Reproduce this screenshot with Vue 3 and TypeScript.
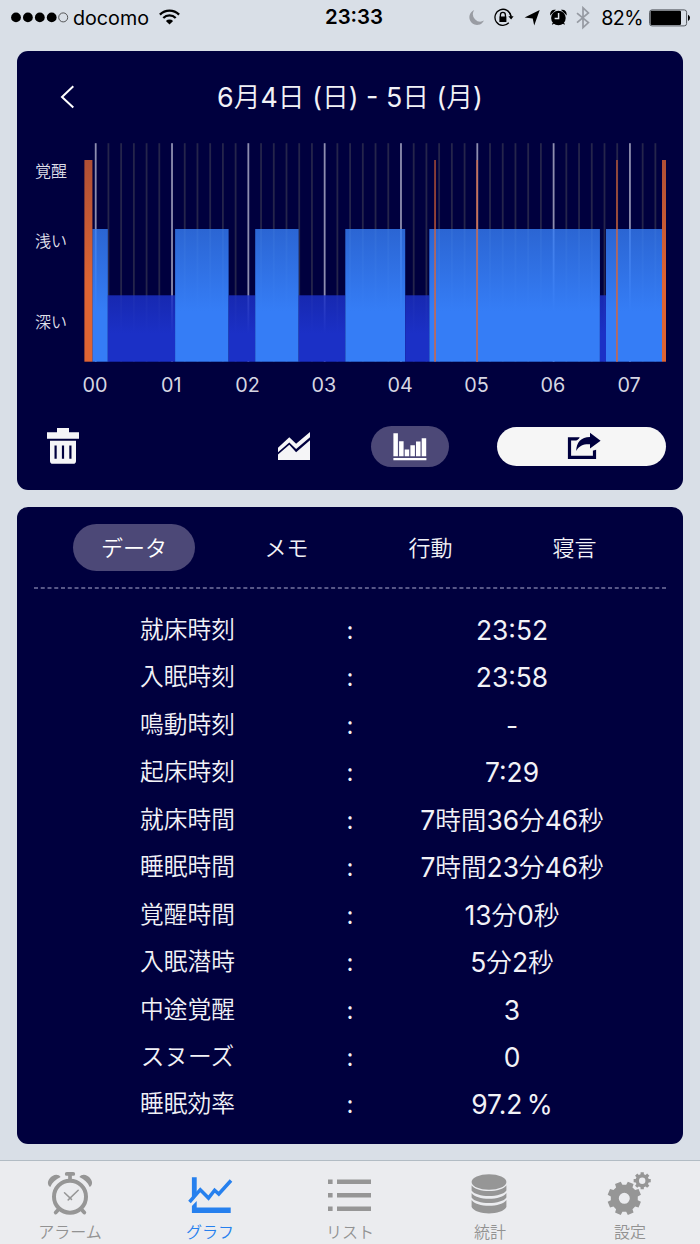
<script setup lang="ts">
interface Band { x: number; w: number; kind: 'light' | 'deep' | 'awake' | 'blip' }

const tops = { light: 229, deep: 295.3, awake: 160, blip: 160 }
const baseY = 361.7

const bands: Band[] = [
  { x: 92.3, w: 15.5, kind: 'light' },
  { x: 107.8, w: 67.3, kind: 'deep' },
  { x: 175.1, w: 53.5, kind: 'light' },
  { x: 228.6, w: 26.6, kind: 'deep' },
  { x: 255.2, w: 43.4, kind: 'light' },
  { x: 298.6, w: 46.7, kind: 'deep' },
  { x: 345.3, w: 59.9, kind: 'light' },
  { x: 405.2, w: 24.1, kind: 'deep' },
  { x: 429.3, w: 170.6, kind: 'light' },
  { x: 599.9, w: 6.1, kind: 'deep' },
  { x: 606, w: 56.2, kind: 'light' },
  { x: 84.4, w: 8, kind: 'awake' },
  { x: 662, w: 4, kind: 'awake' },
  { x: 434.1, w: 1.9, kind: 'blip' },
  { x: 476.1, w: 1.9, kind: 'blip' },
  { x: 616, w: 1.9, kind: 'blip' },
]

const gridLines = Array.from({ length: 45 }, (_, i) => ({ x: 95.7 + i * 12.72, hour: i % 6 === 0 }))
const hours = ['00', '01', '02', '03', '04', '05', '06', '07']

const tabs = ['データ', 'メモ', '行動', '寝言']

const rows: [string, string][] = [
  ['就床時刻', '23:52'],
  ['入眠時刻', '23:58'],
  ['鳴動時刻', '-'],
  ['起床時刻', '7:29'],
  ['就床時間', '7時間36分46秒'],
  ['睡眠時間', '7時間23分46秒'],
  ['覚醒時間', '13分0秒'],
  ['入眠潜時', '5分2秒'],
  ['中途覚醒', '3'],
  ['スヌーズ', '0'],
  ['睡眠効率', '97.2 %'],
]

// Splits a string into latin and kanji runs so each can carry its own weight.
function runs(text: string) {
  return (text.match(/[\x20-\x7e]+|[^\x20-\x7e]+/g) ?? []).map(t => ({ t, latin: t.charCodeAt(0) < 128 }))
}

function gear(cx: number, cy: number, outer: number, root: number, hole: number, start: number): string {
  const pts: string[] = []
  for (let i = 0; i < 8; i++) {
    const mid = start + i * 45
    const corners: [number, number][] = [[-14.5, root], [-10.5, outer], [10.5, outer], [14.5, root]]
    for (const [da, r] of corners) {
      const a = ((mid + da) * Math.PI) / 180
      pts.push(`${(cx + r * Math.cos(a)).toFixed(2)} ${(cy + r * Math.sin(a)).toFixed(2)}`)
    }
  }
  return `M${pts.join('L')}ZM${cx - hole} ${cy}a${hole} ${hole} 0 1 0 ${hole * 2} 0a${hole} ${hole} 0 1 0 ${-hole * 2} 0Z`
}
const gears = gear(24.3, 29.3, 17, 13.6, 5.5, 22.5) + gear(42.2, 11.7, 8.7, 6.7, 3.2, 0)
</script>

<template>
  <div class="screen">
    <header class="status">
      <div class="status-left">
        <svg class="dots" width="58" height="12" viewBox="0 0 58 12">
          <circle v-for="i in 4" :key="i" :cx="5 + (i - 1) * 11.9" cy="5.4" r="4.9" />
          <circle cx="52.2" cy="5.4" r="4.5" fill="none" stroke="#333" stroke-width=".8" />
        </svg>
        <span class="carrier">docomo</span>
        <svg class="wifi" width="21" height="16" viewBox="0 0 21 16">
          <g fill="none" stroke="#000" stroke-width="2.3">
            <path d="M.9 5.6a13.6 13.6 0 0 1 19.2 0" />
            <path d="M4.3 9a8.8 8.8 0 0 1 12.4 0" />
          </g>
          <path d="M10.5 15.6 6.9 12a5.1 5.1 0 0 1 7.2 0Z" />
        </svg>
      </div>
      <div class="clock">23:33</div>
      <div class="status-right">
        <svg width="128" height="24" viewBox="0 0 128 24">
          <path fill="#999ca3" d="M6.2 4.1A7.7 7.7 0 1 0 16 14.6 7.4 7.4 0 0 1 6.2 4.1Z" />
          <g fill="none" stroke="#000" stroke-width="1.3">
            <path d="M42.9 10.2A8 8 0 1 0 40.8 16.8" />
            <path d="M32.4 11V8.9a2.5 2.5 0 0 1 5 0V11" />
            <path d="M40.8 5.9a8 8 0 0 1 2.3 5" />
          </g>
          <path d="M31.4 10.4h7v5.6h-7zM40.4 10.2h5.2l-2.5 3.3z" />
          <path d="M71.7 4 66.2 19.4 64.7 12.5 56.6 11.5Z" />
          <circle cx="90.4" cy="12" r="7.3" />
          <path d="M82.7 8a4 4 0 0 1 3.8-3.7zM98.1 8a4 4 0 0 0-3.8-3.7zM84.2 18.4l2-2M96.6 18.4l-2-2" stroke="#000" stroke-width="1.1" />
          <path d="M90.6 7v5.6h-4" fill="none" stroke="#e4e8ee" stroke-width="1.5" />
          <path d="M109 7.2 120.4 16.6 115 21.6V1.8L120.4 6.9 109 16.6" fill="none" stroke="#969aa2" stroke-width="1.7" />
        </svg>
        <span class="percent">82%</span>
        <svg class="battery" width="42" height="18" viewBox="0 0 42 18">
          <rect x=".6" y=".9" width="37" height="16" rx="2.4" fill="none" stroke="#555a60" stroke-width="1" />
          <rect x="1.5" y="1.8" width="30.5" height="14.2" rx="1.2" />
          <path d="M39 5.7a3.4 3.4 0 0 1 0 6.2Z" />
        </svg>
      </div>
    </header>

    <section class="card graph">
      <div class="title">
        <svg class="back" width="15" height="24" viewBox="0 0 15 24">
          <path d="M13.3 1.3 2 12 13.3 22.6" fill="none" stroke="#fff" stroke-width="2" />
        </svg>
        <h1><span v-for="(s, i) in runs('6月4日 (日) - 5日 (月)')" :key="i" :class="{ latin: s.latin }">{{ s.t }}</span></h1>
      </div>

      <svg class="chart" width="666" height="262" viewBox="17 140 666 262">
        <defs>
          <linearGradient id="light" x2="0" y2="1">
            <stop offset="0" stop-color="#357df6" stop-opacity=".81" />
            <stop offset=".62" stop-color="#357df6" />
          </linearGradient>
          <linearGradient id="deep" x2="0" y2="1">
            <stop offset="0" stop-color="#1b30c6" stop-opacity=".84" />
            <stop offset=".58" stop-color="#1b30c6" />
          </linearGradient>
          <linearGradient id="awake" x2="0" y2="1">
            <stop offset="0" stop-color="#de6433" stop-opacity=".79" />
            <stop offset=".62" stop-color="#de6433" />
          </linearGradient>
        </defs>
        <rect
          v-for="(g, i) in gridLines" :key="'g' + i" :x="g.x - 0.9" y="143.2" width="1.8" :height="baseY - 143.2"
          :class="g.hour ? 'line-hour' : 'line-minor'"
        />
        <rect
          v-for="(b, i) in bands" :key="'b' + i" :x="b.x" :width="b.w" :y="tops[b.kind]" :height="baseY - tops[b.kind]"
          :class="b.kind"
        />
        <g class="levels">
          <text x="35" y="176.7">覚醒</text>
          <text x="35" y="246.7">浅い</text>
          <text x="35" y="327.5">深い</text>
        </g>
        <g class="hours">
          <text v-for="(h, i) in hours" :key="h" :x="95 + i * 76.3" y="391.7">{{ h }}</text>
        </g>
      </svg>

      <div class="tools">
        <svg class="trash" width="32" height="36" viewBox="0 0 32 36" fill="#f5f5f7">
          <path d="M0 4.3h10V0h12v4.3h10v6.4H0Z" />
          <path fill-rule="evenodd" d="M3 12.7h26v20.2a2.8 2.8 0 0 1-2.8 2.8H5.8A2.8 2.8 0 0 1 3 32.9ZM7.5 17.6v13.2h2.2V17.6ZM14.9 17.6v13.2h2.2V17.6ZM22.3 17.6v13.2h2.2V17.6Z" />
        </svg>
        <svg class="area" width="32" height="28" viewBox="0 0 32 28" fill="#f5f5f7">
          <path d="M0 15.8 11.3 5.2 18.1 11.8 32 0V5.2L18.1 17.1 11.3 10.4 0 20.3Z" />
          <path d="M0 22.6 11.3 12.7 18.1 20.2 32 8.2V28H0Z" />
        </svg>
        <div class="bars-pill">
          <svg width="34" height="28" viewBox="0 0 34 28" fill="#fff">
            <path d="M.4.3h4.5v23H.4zM6.1 8.2h4.5v15.1H6.1zM11.7 16.6h4.5v6.7h-4.5zM17.4 12.3h4.5v11h-4.5zM23 8.6h4.5v14.7H23zM28.7 5.3h4.5v18h-4.5zM.4 25h33v2.3H.4z" />
          </svg>
        </div>
        <div class="share">
          <svg width="34" height="28" viewBox="0 0 34 28">
            <path d="M12.5 6.8H2.5v18.6h25V17" fill="none" stroke="#00003e" stroke-width="3.2" />
            <path fill="#f6f6f6" d="M8 19V10l7-6h8v12l-6 1-5 5z" />
            <path fill="#00003e" d="M23 .7 33.6 8.7 23 16.4V12.2C16.5 11.9 12.3 13.3 9.2 19 9.4 10.2 14 5.2 23 4.9Z" />
            <path fill="#f6f6f6" d="M24.5 17.5 30 14v3.5l-4.5 1.3z" />
          </svg>
        </div>
      </div>
    </section>

    <section class="card details">
      <nav class="tabs">
        <span v-for="(t, i) in tabs" :key="t" :class="['tab', { active: i === 0 }]">{{ t }}</span>
      </nav>
      <svg class="rule" width="632" height="2" viewBox="0 0 632 2">
        <path d="M0 1H632" stroke="#7474a0" stroke-width="1.3" stroke-dasharray="4 2.753" />
      </svg>
      <dl>
        <div v-for="r in rows" :key="r[0]" class="row">
          <dt>{{ r[0] }}</dt>
          <span class="colon">:</span>
          <dd><span v-for="(s, i) in runs(r[1])" :key="i" :class="{ latin: s.latin }">{{ s.t }}</span></dd>
        </div>
      </dl>
    </section>

    <footer class="tabbar">
      <div class="item">
        <svg width="60" height="48" viewBox="0 0 60 48" fill="none" stroke="#969696">
          <circle cx="30" cy="27.7" r="16" stroke-width="4" />
          <path d="M30 10V5M26.7 4.9h6.6" stroke-width="3.7" stroke-linecap="round" />
          <path d="M18 41l-2.3 2.5M42 41l2.3 2.5" stroke-width="3.8" stroke-linecap="round" />
          <path d="M24.5 23.8l7 6.6M38.2 21.3 28.2 30.9" stroke-width="1.5" stroke-linecap="round" />
          <path d="M10.3 18C6 15.5 8 9.5 12.5 7 15.5 5 18.8 5.4 20.6 8 15.5 10.3 12.3 13.5 10.3 18ZM49.7 18C54 15.5 52 9.5 47.5 7 44.5 5 41.2 5.4 39.4 8 44.5 10.3 47.7 13.5 49.7 18Z" fill="#969696" stroke="none" />
        </svg>
        <span>アラーム</span>
      </div>
      <div class="item on">
        <svg width="60" height="48" viewBox="1 0 60 48">
          <path fill="#2680ee" d="M12.9 8.2h4.8V24l-4.8 5.2zM17.7 32v6.4h34V44H12.9v-7z" />
          <path d="M10.5 33 21.3 20.7 29.5 29 35.6 21.2 39.8 25 52 11.5" fill="none" stroke="#2680ee" stroke-width="3.5" />
        </svg>
        <span>グラフ</span>
      </div>
      <div class="item">
        <svg width="60" height="48" viewBox="0 0 60 48" fill="#969696">
          <path d="M8 10.4h4.6V15H8zM17 10.4h34V15H17zM8 24h4.6v4.5H8zM17 24h34v4.5H17zM8 37.6h4.6V42H8zM17 37.6h34V42H17z" />
        </svg>
        <span>リスト</span>
      </div>
      <div class="item">
        <svg width="60" height="48" viewBox="0 0 60 48" fill="#969696">
          <ellipse cx="29" cy="13" rx="17.4" ry="7.8" />
          <path d="M11.6 16.3C16 24 42 24 46.4 16.3v5.2C42 28.8 16 28.8 11.6 21.5ZM11.6 24C16 31.7 42 31.7 46.4 24v4.5C42 35.8 16 35.8 11.6 28.5ZM11.6 31C16 38.7 42 38.7 46.4 31v7C42 46.6 16 46.6 11.6 38Z" />
        </svg>
        <span>統計</span>
      </div>
      <div class="item">
        <svg width="60" height="48" viewBox="0 0 60 48">
          <path :d="gears" fill="#969696" fill-rule="evenodd" />
        </svg>
        <span>設定</span>
      </div>
    </footer>
  </div>
</template>

<style>
body { margin: 0; background: #d9dfe7; }
</style>

<style scoped>
.screen {
  width: 700px;
  height: 1244px;
  display: flex;
  flex-direction: column;
  background: #d9dfe7;
  color: #f2f2f7;
  font-family: Inter, "Noto Sans CJK JP", sans-serif;
  font-weight: 350;
  overflow: hidden;
}
svg { display: block; flex: none; }
.latin { font-weight: 400; white-space: pre; }
.status {
  height: 36px;
  margin-bottom: 15px;
  padding: 0 9px 0 11px;
  display: grid;
  grid-template-columns: 1fr auto 1fr;
  align-items: center;
  color: #000;
  font-size: 19.7px;
  font-weight: 400;
}
.status-left, .status-right { display: flex; align-items: center; }
.status-right { justify-content: flex-end; }
.carrier { margin-left: 4px; }
.wifi { margin: 0 0 3px 10px; }
.clock { font-weight: 600; font-size: 20.4px; line-height: 24px; margin: 0 0 2px 6px; }
.percent { margin: 0 6px 0 5px; letter-spacing: -.6px; }
.card {
  box-sizing: border-box;
  width: 666px;
  margin: 0 auto;
  border-radius: 11px;
  background: #00003e;
  flex: none;
}
.graph { height: 439px; margin-bottom: 17px; }
.title { height: 89px; display: flex; align-items: center; }
.back { margin: 3px 0 0 43px; }
h1 {
  margin: 3px 58px 0 0;
  flex: 1;
  text-align: center;
  font-size: 26.8px;
  line-height: 36px;
  font-weight: 350;
}
.line-hour { fill: #8e8eaf; }
.line-minor { fill: #25254b; }
.light { fill: url(#light); }
.deep { fill: url(#deep); }
.awake { fill: url(#awake); }
.blip { fill: url(#awake); opacity: .75; }
.levels { fill: #dedee8; font-size: 16px; }
.hours { fill: #d6d6e2; font-size: 19.8px; font-weight: 400; text-anchor: middle; }
.tools { height: 88px; display: flex; align-items: center; padding: 0 17px 0 30px; }
.area { margin: -1px 0 0 199px; }
.bars-pill {
  width: 78px;
  height: 41px;
  margin-left: 61px;
  border-radius: 21px;
  background: #4c4877;
  display: grid;
  place-items: center;
}
.bars-pill svg { margin-top: 2px; }
.share {
  width: 169px;
  height: 39px;
  margin-left: 48px;
  border-radius: 20px;
  background: #f6f6f6;
  display: grid;
  place-items: center;
}
.share svg { margin-left: 4px; }
.details { height: 637px; }
.tabs { display: flex; gap: 23px; padding: 17px 0 0 56px; height: 47px; }
.tab {
  width: 121px;
  height: 47px;
  line-height: 48px;
  border-radius: 24px;
  text-align: center;
  font-size: 22px;
}
.active { width: 122px; margin-right: 8px; background: #4c4877; color: #fff; }
.rule { margin: 16px 17px 0; }
dl { margin: 18px 0 0; }
.row {
  display: grid;
  grid-template-columns: 313px 40px 1fr;
  height: 47.45px;
  line-height: 46px;
  text-align: center;
}
dt { padding-left: 28px; font-size: 23.7px; line-height: 45px; }
dd { margin: 0; padding-right: 29px; font-size: 25.6px; white-space: nowrap; word-spacing: -3px; }
dd .latin { font-size: 26.4px; }
.colon { font-size: 24px; font-weight: 400; line-height: 48px; }
.tabbar {
  margin-top: 16px;
  height: 83px;
  border-top: 1px solid #b2bcc4;
  background: #ebecef;
  display: grid;
  grid-template-columns: repeat(5, 140px);
  color: #929292;
  font-size: 16px;
}
.item { display: flex; flex-direction: column; align-items: center; padding-top: 8px; }
.item span { line-height: 24px; margin: 3px 0 0; }
.on { color: #2680ee; }
</style>
